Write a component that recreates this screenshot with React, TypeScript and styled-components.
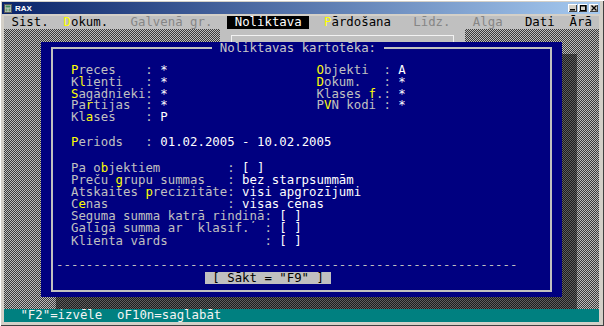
import React from "react";
import styled, { createGlobalStyle } from "styled-components";

const GlobalStyle = createGlobalStyle`
  html, body {
    margin: 0;
    padding: 0;
    overflow: hidden;
    background: #d4d0c8;
  }
`;

const MONO = `"DejaVu Sans Mono", "Liberation Mono", monospace`;

const Window = styled.div`
  width: 604px;
  height: 326px;
  box-sizing: border-box;
  padding: 2px 4px 0 2px;
  background: #d4d0c8;
  box-shadow: inset 1px 1px 0 #ffffff, inset -1px -1px 0 #404040;
  display: flex;
  flex-direction: column;
`;

const TitleBar = styled.div`
  height: 12px;
  display: flex;
  align-items: center;
  padding: 0 2px;
  background: linear-gradient(90deg, #0a246a 0%, #a6caf0 100%);
`;

const TitleText = styled.span`
  margin-left: 3px;
  font-family: "Liberation Sans", Arial, sans-serif;
  font-weight: bold;
  font-size: 8px;
  color: #ffffff;
  flex: 1;
`;

const CaptionButtons = styled.div`
  display: flex;
  gap: 1px;
`;

const CaptionButton = styled.div<{ $gap?: boolean }>`
  width: 9px;
  height: 8px;
  margin-left: ${(p) => (p.$gap ? "1px" : "0")};
  background: #d4d0c8;
  box-shadow: inset 1px 1px 0 #ffffff, inset -1px -1px 0 #404040;
  display: flex;
  align-items: center;
  justify-content: center;
`;

const Console = styled.div`
  margin: 2px 0 0 2px;
  width: 80ch;
  font-family: ${MONO};
  font-size: 12.36px;
  display: flex;
  flex-direction: column;
`;

const MenuBar = styled.div`
  height: 12.5px;
  line-height: 12.5px;
  background: #c0c0c0;
  display: flex;
  white-space: pre;
`;

type MenuState = "normal" | "disabled" | "active";

const MenuItem = styled.span<{ $gap: number; $state?: MenuState }>`
  margin-left: ${(p) => p.$gap}ch;
  padding: ${(p) => (p.$state === "active" ? "0 1ch" : "0")};
  background: ${(p) => (p.$state === "active" ? "#000000" : "transparent")};
  color: ${(p) =>
    p.$state === "active" ? "#ffffff" : p.$state === "disabled" ? "#868686" : "#000000"};
`;

const Hot = styled.span`
  display: inline-block;
  color: #ffff00;
`;

const Desktop = styled.div`
  height: 280.5px;
  display: flex;
  flex-direction: column;
  background-color: #3a3a3a;
  background-image: repeating-conic-gradient(#bcbcbc 0 25%, #3a3a3a 0 50%);
  background-size: 2px 2px;
`;

const TopStrip = styled.div`
  height: 13.5px;
  display: flex;
`;

const DropMenu = styled.div`
  margin-left: 29ch;
  width: 33ch;
  box-sizing: border-box;
  padding-top: 6px;
  background: #c0c0c0;
  display: flex;
`;

const DropFrame = styled.div`
  flex: 1;
  margin: 0 1.5ch;
  border: 1px solid #f2f2f2;
  border-bottom: none;
`;

const Dialog = styled.div`
  margin-left: 5ch;
  width: 70ch;
  height: 255px;
  box-sizing: border-box;
  padding: 0 calc(1.5ch - 1px) 5px;
  background: #000080;
  box-shadow: 2ch 12px 0 rgba(0, 0, 0, 0.5);
  display: flex;
  flex-direction: column;
`;

const Frame = styled.fieldset`
  flex: 1;
  margin: 0;
  padding: 0;
  min-width: 0;
  border: 2px solid #c0c0c0;
`;

const Legend = styled.legend`
  margin-left: 159px;
  padding: 0 1ch;
  line-height: 12.1px;
  color: #c8c8c8;
  white-space: pre;
`;

const Body = styled.div`
  padding: 11px 0 0 17.6px;
  display: flex;
  flex-direction: column;
`;

const FilterGrid = styled.div`
  display: grid;
  grid-template-columns: 33ch auto;
  grid-auto-rows: 11.75px;
  line-height: 11.75px;
`;

const Line = styled.div<{ $indent?: number; $top?: number }>`
  height: 12.1px;
  line-height: 12.1px;
  margin-left: ${(p) => p.$indent ?? 0}ch;
  margin-top: ${(p) => p.$top ?? 0}px;
  display: flex;
  white-space: pre;
`;

const Cell = styled.div`
  display: flex;
  white-space: pre;
`;

const Blank = styled.div<{ $h: number }>`
  height: ${(p) => p.$h}px;
`;

const Label = styled.span<{ $w: number }>`
  width: ${(p) => p.$w}ch;
  flex: none;
  color: #c0c0c0;
`;

const Colon = styled.span`
  color: #c0c0c0;
`;

const Value = styled.span`
  color: #ffffff;
`;

const Dashes = styled.span`
  color: #c0c0c0;
`;

const StartButton = styled.span`
  background: #c0c0c0;
  color: #000000;
`;

const StatusBar = styled.div`
  height: 13px;
  line-height: 13px;
  padding-left: calc(2ch + 1.5px);
  background: #008080;
  color: #f4f4f4;
  white-space: pre;
`;

function hot(text: string, idx: number) {
  return (
    <>
      {text.slice(0, idx)}
      <Hot>{text[idx]}</Hot>
      {text.slice(idx + 1)}
    </>
  );
}

type FieldProps = { label: string; hk?: number; w: number; value: string };

function Field({ label, hk, w, value }: FieldProps) {
  return (
    <>
      <Label $w={w}>{hk === undefined ? label : hot(label, hk)}</Label>
      <Colon>: </Colon>
      <Value>{value}</Value>
    </>
  );
}

const leftFilters = [
  { label: "Preces", hk: 0, value: "*" },
  { label: "Klienti", hk: 1, value: "*" },
  { label: "Sagādnieki", hk: 0, value: "*" },
  { label: "Partijas", hk: 2, value: "*" },
  { label: "Klases", hk: 2, value: "P" },
];

const rightFilters = [
  { label: "Objekti", hk: 0, value: "A" },
  { label: "Dokum.", hk: 0, value: "*" },
  { label: "Klases f.", hk: 7, value: "*" },
  { label: "PVN kodi", hk: 1, value: "*" },
];

const options = [
  { label: "Pa objektiem", hk: 4, w: 21, value: "[ ]" },
  { label: "Preču grupu summas", hk: 6, w: 21, value: "bez starpsummām" },
  { label: "Atskaites precizitāte", hk: 10, w: 21, value: "visi apgrozījumi" },
  { label: "Cenas", hk: 1, w: 21, value: "visas cenas" },
  { label: "Seguma summa katrā rindiņā", w: 26, value: "[ ]" },
  { label: "Galīgā summa ar  klasif.", w: 26, value: "[ ]" },
  { label: "Klienta vārds", w: 26, value: "[ ]" },
];

function AppIcon() {
  return (
    <svg width="8" height="9" viewBox="0 0 8 9">
      <rect x="0.5" y="0.5" width="7" height="8" fill="#c8c8c8" stroke="#5a5a5a" />
      <rect x="1.5" y="1.5" width="5" height="2" fill="#3c8c5a" />
      <rect x="1.5" y="4.5" width="2" height="3" fill="#6aa070" />
      <rect x="4.5" y="4.5" width="2" height="3" fill="#6aa070" />
    </svg>
  );
}

function App() {
  return (
    <>
      <GlobalStyle />
      <Window>
        <TitleBar>
          <AppIcon />
          <TitleText>RAX</TitleText>
          <CaptionButtons>
            <CaptionButton>
              <svg width="5" height="6" viewBox="0 0 5 6">
                <rect x="0" y="4" width="5" height="1.5" fill="#000" />
              </svg>
            </CaptionButton>
            <CaptionButton>
              <svg width="6" height="6" viewBox="0 0 6 6">
                <rect x="0.5" y="0.5" width="5" height="5" fill="none" stroke="#000" />
                <rect x="0" y="0" width="6" height="1.5" fill="#000" />
              </svg>
            </CaptionButton>
            <CaptionButton $gap>
              <svg width="6" height="6" viewBox="0 0 6 6">
                <path d="M0.5 0.5 L5.5 5.5 M5.5 0.5 L0.5 5.5" stroke="#000" strokeWidth="1.3" />
              </svg>
            </CaptionButton>
          </CaptionButtons>
        </TitleBar>

        <Console>
          <MenuBar>
            <MenuItem $gap={1}>Sist.</MenuItem>
            <MenuItem $gap={2}>{hot("Dokum.", 0)}</MenuItem>
            <MenuItem $gap={3} $state="disabled">Galvenā gr.</MenuItem>
            <MenuItem $gap={2} $state="active">Noliktava</MenuItem>
            <MenuItem $gap={2}>{hot("Pārdošana", 0)}</MenuItem>
            <MenuItem $gap={3} $state="disabled">Līdz.</MenuItem>
            <MenuItem $gap={3} $state="disabled">Alga</MenuItem>
            <MenuItem $gap={3}>Dati</MenuItem>
            <MenuItem $gap={2}>Ārā</MenuItem>
          </MenuBar>

          <Desktop>
            <TopStrip>
              <DropMenu>
                <DropFrame />
              </DropMenu>
            </TopStrip>

            <Dialog>
              <Frame>
                <Legend>Noliktavas kartotēka:</Legend>
                <Body>
                  <FilterGrid>
                    {leftFilters.map((f, i) => (
                      <React.Fragment key={f.label}>
                        <Cell>
                          <Field label={f.label} hk={f.hk} w={10} value={f.value} />
                        </Cell>
                        <Cell>
                          {rightFilters[i] && (
                            <Field
                              label={rightFilters[i].label}
                              hk={rightFilters[i].hk}
                              w={9}
                              value={rightFilters[i].value}
                            />
                          )}
                        </Cell>
                      </React.Fragment>
                    ))}
                  </FilterGrid>
                  <Blank $h={12} />
                  <Line>
                    <Field label="Periods" hk={0} w={10} value="01.02.2005 - 10.02.2005" />
                  </Line>
                  <Blank $h={14} />
                  {options.map((o) => (
                    <Line key={o.label}>
                      <Field label={o.label} hk={o.hk} w={o.w} value={o.value} />
                    </Line>
                  ))}
                  <Blank $h={12.1} />
                  <Line $indent={-2}>
                    <Dashes>{"-".repeat(62)}</Dashes>
                  </Line>
                  <Line $indent={18} $top={1.5}>
                    <StartButton>{' [ Sākt = "F9" ] '}</StartButton>
                  </Line>
                </Body>
              </Frame>
            </Dialog>
          </Desktop>

          <StatusBar>{'"F2"=izvēle  oF10n=saglabāt'}</StatusBar>
        </Console>
      </Window>
    </>
  );
}

export default App;
